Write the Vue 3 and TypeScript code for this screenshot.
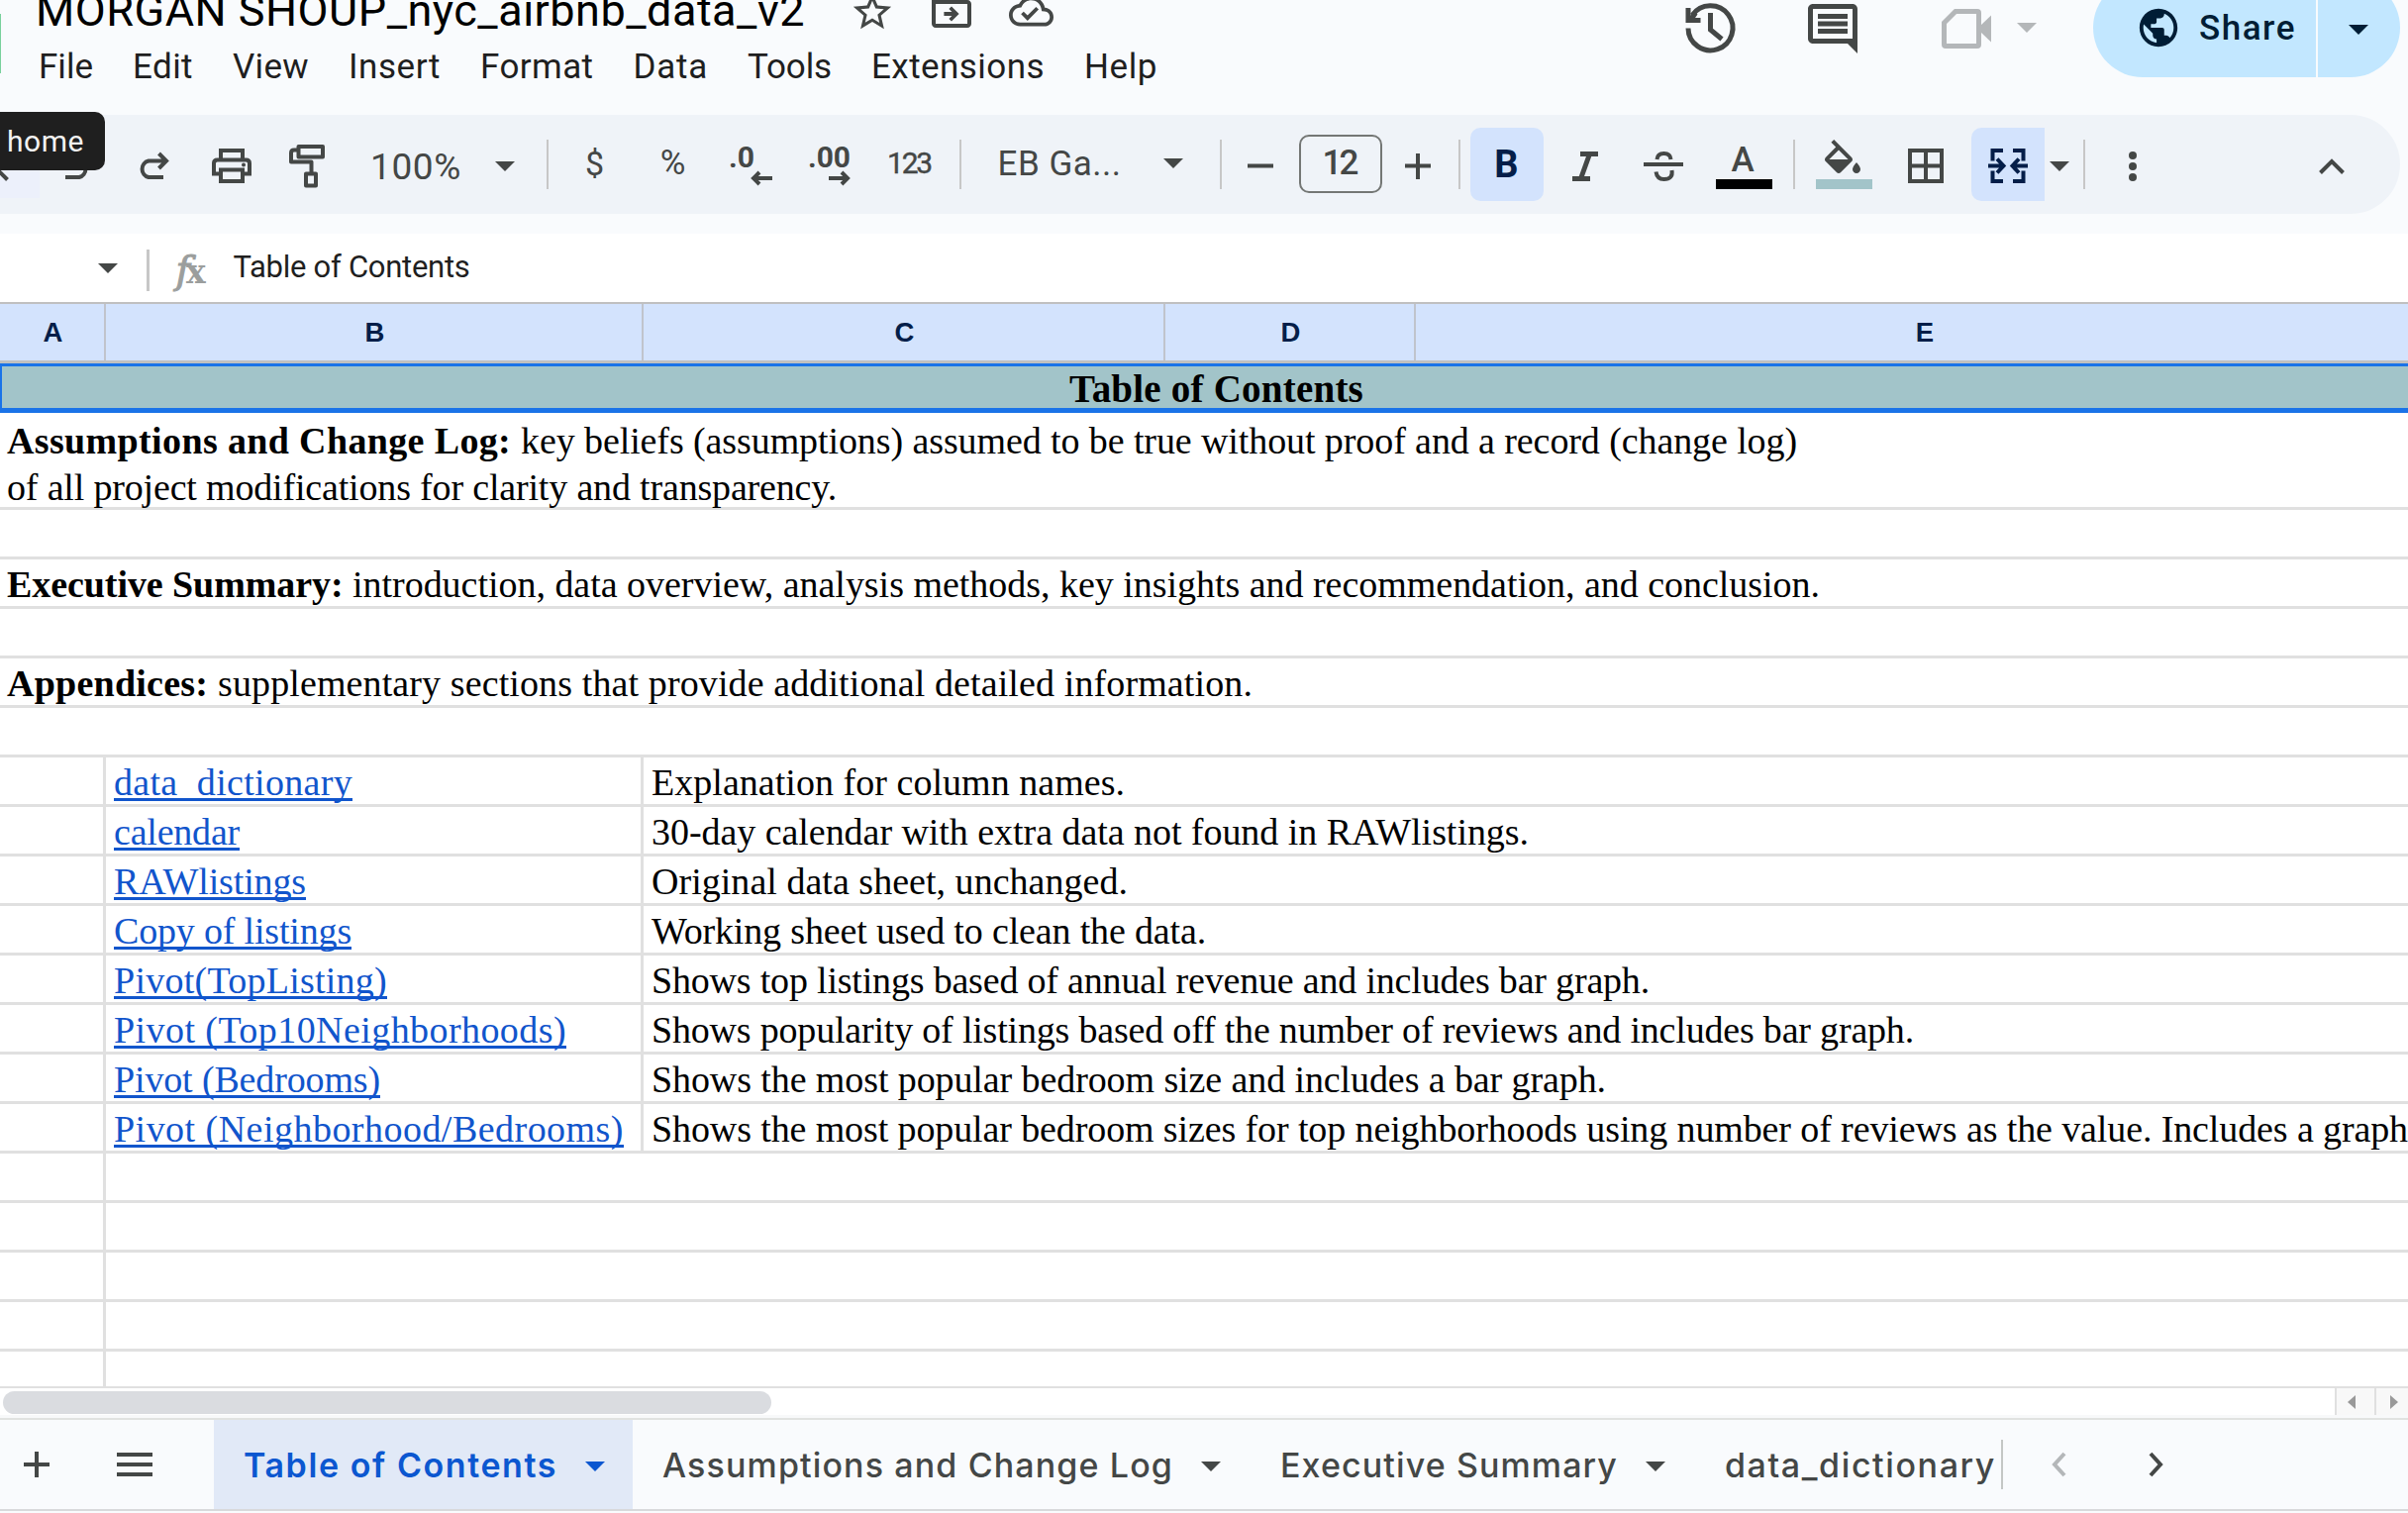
<script setup lang="ts">
import type { Directive } from 'vue'

/* Tracks a run of text in or out so that it fills the given width. */
const vFit: Directive<HTMLElement, number> = {
  mounted(el, { value }) {
    const natural = el.getBoundingClientRect().width
    const count = (el.textContent ?? '').length
    el.style.letterSpacing = `${(value - natural) / count}px`
  },
}

interface Label { text: string; width: number }
interface LinkRow { link: string; linkWidth: number; note: string; noteWidth: number }
interface Tab extends Label { active?: boolean; menu: boolean }

const menus: Label[] = [
  { text: 'File', width: 55 },
  { text: 'Edit', width: 61 },
  { text: 'View', width: 77 },
  { text: 'Insert', width: 93 },
  { text: 'Format', width: 114.5 },
  { text: 'Data', width: 75.5 },
  { text: 'Tools', width: 85 },
  { text: 'Extensions', width: 175 },
  { text: 'Help', width: 74 },
]

const columns = ['A', 'B', 'C', 'D', 'E']

const links: LinkRow[] = [
  { link: 'data_dictionary', linkWidth: 241, note: 'Explanation for column names.', noteWidth: 478 },
  { link: 'calendar', linkWidth: 127, note: '30-day calendar with extra data not found in RAWlistings.', noteWidth: 886 },
  { link: 'RAWlistings', linkWidth: 194, note: 'Original data sheet, unchanged.', noteWidth: 481 },
  { link: 'Copy of listings', linkWidth: 240, note: 'Working sheet used to clean the data.', noteWidth: 560 },
  { link: 'Pivot(TopListing)', linkWidth: 276, note: 'Shows top listings based of annual revenue and includes bar graph.', noteWidth: 1008 },
  { link: 'Pivot (Top10Neighborhoods)', linkWidth: 457, note: 'Shows popularity of listings based off the number of reviews and includes bar graph.', noteWidth: 1275 },
  { link: 'Pivot (Bedrooms)', linkWidth: 269, note: 'Shows the most popular bedroom size and includes a bar graph.', noteWidth: 964 },
  { link: 'Pivot (Neighborhood/Bedrooms)', linkWidth: 515, note: 'Shows the most popular bedroom sizes for top neighborhoods using number of reviews as the value. Includes a graph', noteWidth: 1774 },
]

const tabs: Tab[] = [
  { text: 'Table of Contents', width: 317, active: true, menu: true },
  { text: 'Assumptions and Change Log', width: 516, menu: true },
  { text: 'Executive Summary', width: 341, menu: true },
  { text: 'data_dictionary', width: 274, menu: false },
]
</script>

<template>
  <div class="app">
    <header class="top">
      <i class="logo-edge"></i>
      <div class="doc">
        <div class="title-row">
          <span class="title"><span v-fit="777">MORGAN SHOUP_nyc_airbnb_data_v2</span></span>
          <svg class="star" viewBox="0 0 24 24"><path d="M22 9.24l-7.19-.62L12 2 9.19 8.63 2 9.24l5.46 4.73L5.82 21 12 17.27 18.18 21l-1.63-7.03L22 9.24zM12 15.4l-3.76 2.27 1-4.28-3.32-2.88 4.38-.38L12 6.1l1.71 4.04 4.38.38-3.32 2.88 1 4.28L12 15.4z" /></svg>
          <svg class="folder" viewBox="0 0 24 24"><path d="M20 6h-8l-2-2H4c-1.1 0-2 .9-2 2v12c0 1.1.9 2 2 2h16c1.1 0 2-.9 2-2V8c0-1.1-.9-2-2-2zm0 12H4V8h16v10zm-8-1.2l3.8-3.8L12 9.2l-1.3 1.3 1.5 1.5H8.200v2h4l-1.500 1.500z" /></svg>
          <svg class="cloud" viewBox="0 0 24 24"><path d="M19.35 10.04C18.67 6.59 15.64 4 12 4 9.11 4 6.6 5.64 5.35 8.04 2.34 8.36 0 10.91 0 14c0 3.31 2.69 6 6 6h13c2.76 0 5-2.24 5-5 0-2.64-2.05-4.78-4.65-4.96zM19 18H6c-2.21 0-4-1.79-4-4 0-2.05 1.53-3.76 3.56-3.97l1.07-.11.5-.95C8.08 7.14 9.94 6 12 6c2.62 0 4.88 1.86 5.39 4.43l.3 1.5 1.53.11c1.56.1 2.78 1.41 2.78 2.96 0 1.65-1.35 3-3 3zm-9-3.82l-2.090-2.090L6.500 13.500 10 17l6.010-6.010-1.410-1.410z" /></svg>
        </div>
        <nav class="menus">
          <span v-for="m in menus" :key="m.text" v-fit="m.width">{{ m.text }}</span>
        </nav>
      </div>
      <div class="actions">
        <svg class="history" viewBox="0 0 50 50"><path class="ln thick" d="M2.500 25.500A22.500 22.500 0 1 0 6.500 12.500" /><path class="ln thick" d="M2.500 5v12.500H15M5 17l5-7M25 10v17l11.500 9.500" /></svg>
        <svg class="comment" viewBox="2 2 20 20"><path d="M21.99 4c0-1.1-.89-2-1.99-2H4c-1.100 0-2 .9-2 2v12c0 1.100.9 2 2 2h14l4 4-.01-18zM20 4v12H4V4h16zM6 12h12v2H6zm0-3h12v2H6zm0-3h12v2H6z" /></svg>
        <svg class="video" viewBox="0 0 50 40"><path d="M14 2.500H36Q37.500 2.500 37.500 4V36Q37.500 37.500 36 37.500H4Q2.500 37.500 2.500 36V14Z" fill="none" stroke="currentColor" stroke-width="5" /><path d="M50 6.500V33.500L39 23V17Z" /></svg>
        <svg class="caret pale" viewBox="0 0 20 10"><path d="M0 0H20L10 10Z" /></svg>
        <div class="share">
          <button class="share-main">
            <svg viewBox="0 0 24 24"><path d="M12 2C6.480 2 2 6.480 2 12s4.480 10 10 10 10-4.480 10-10S17.520 2 12 2zm-1 17.930c-3.950-.49-7-3.850-7-7.930 0-.62.080-1.210.21-1.790L9 15v1c0 1.100.9 2 2 2v1.930zm6.900-2.540c-.26-.81-1-1.390-1.900-1.390h-1v-3c0-.55-.45-1-1-1H8v-2h2c.55 0 1-.45 1-1V7h2c1.100 0 2-.9 2-2v-.41c2.930 1.190 5 4.060 5 7.410 0 2.080-.8 3.970-2.100 5.390z" /></svg>
            <span v-fit="98">Share</span>
          </button>
          <button class="share-more"><svg class="caret" viewBox="0 0 20 10"><path d="M0 0H20L10 10Z" /></svg></button>
        </div>
      </div>
    </header>

    <div class="toolbar">
      <div class="find"><svg viewBox="0 0 37 40"><path d="M-6 6L7.500 19.500" stroke="currentColor" stroke-width="4" /></svg></div>
      <div class="cell w78"><svg width="30" height="27" viewBox="0 0 30 27"><path d="M9.500 1L2 8.500 9.500 16M3 8.500H19A8.500 8.500 0 0 1 19 25H5" class="ln" /></svg></div>
      <div class="cell w80"><svg width="30" height="27" viewBox="0 0 30 27"><path d="M20.500 1L28 8.500 20.500 16M27 8.500H10A8.500 8.500 0 0 0 10 25H25" class="ln" /></svg></div>
      <div class="cell w78"><svg width="40" height="35" viewBox="0 0 40 35"><path d="M9 11V2H31V11M9 25.500H2V15Q2 11.500 5.500 11.500H34.500Q38 11.500 38 15V25.500H31M9 21.500H31V33H9Z" class="ln" /><circle cx="32" cy="16.500" r="2" /></svg></div>
      <div class="cell w74"><svg width="36" height="44" viewBox="0 0 36 44"><path d="M9.500 2H34V12.500H9.500ZM9.500 5.500H5Q2 5.500 2 8.500V17.500H22.500V28M17 29.500H27V41.500H17Z" class="ln" stroke-linejoin="round" /></svg></div>
      <div class="cell w146 label zoom"><span v-fit="92">100%</span></div>
      <div class="cell w34"><svg class="caret" viewBox="0 0 20 10"><path d="M0 0H20L10 10Z" /></svg></div>
      <div class="cell w52"><i class="rule"></i></div>
      <div class="cell w43 sym dollar">$</div>
      <div class="cell w115 sym percent">%</div>
      <div class="cell w44"><svg width="42" height="42" viewBox="0 0 42 42"><text x="-2" y="22" class="dec" textLength="26" lengthAdjust="spacingAndGlyphs">.0</text><path d="M29 27L23 33 29 39M23.500 33H42" class="ln" /></svg></div>
      <div class="cell w114"><svg width="42" height="42" viewBox="0 0 42 42"><text x="-1" y="22" class="dec" textLength="43" lengthAdjust="spacingAndGlyphs">.00</text><path d="M33 27L39 33 33 39M38.500 33H20" class="ln" /></svg></div>
      <div class="cell w48 num"><span v-fit="44">123</span></div>
      <div class="cell w54"><i class="rule"></i></div>
      <div class="cell w146 label family"><span v-fit="125">EB Ga...</span></div>
      <div class="cell w84"><svg class="caret up3" viewBox="0 0 20 10"><path d="M0 0H20L10 10Z" /></svg></div>
      <div class="cell w12"><i class="rule"></i></div>
      <div class="cell w68"><svg width="26" height="26" viewBox="0 0 26 26"><path d="M0 12.500H26" class="ln" /></svg></div>
      <div class="cell w94"><div class="size"><span v-fit="34">12</span></div></div>
      <div class="cell w62"><svg width="26" height="26" viewBox="0 0 26 26"><path d="M0 12.500H26M13 0V26" class="ln" /></svg></div>
      <div class="cell w22"><i class="rule"></i></div>
      <div class="cell w74 on bold">B</div>
      <div class="cell w84"><svg width="26" height="30" viewBox="0 0 26 30"><path d="M8 2.500H26M0 27.500H18M17.500 2.500L8.500 27.500" class="ln thick" /></svg></div>
      <div class="cell w74"><svg width="40" height="30" viewBox="0 0 40 30"><path d="M0 13H40M13.500 8Q14 2 20.500 2T27.500 8M12.500 20.500Q13.500 28 20.500 28 30 28 28.500 19" class="ln" /></svg></div>
      <div class="cell w89 swatch"><span>A</span><i class="ink"></i></div>
      <div class="cell w12"><i class="rule"></i></div>
      <div class="cell w89 swatch"><svg viewBox="0 0 24 18"><path d="M16.560 8.940L7.620 0 6.210 1.410l2.380 2.380-5.150 5.150c-.59.59-.59 1.540 0 2.120l5.500 5.500c.29.29.68.44 1.060.44s.77-.15 1.060-.44l5.500-5.500c.59-.58.59-1.530 0-2.120zM5.210 10L10 5.210 14.790 10H5.210zM19 11.500s-2 2.170-2 3.500c0 1.100.9 2 2 2s2-.9 2-2c0-1.330-2-3.500-2-3.500z" /></svg><i class="paint"></i></div>
      <div class="cell w75"><svg width="36" height="35" viewBox="0 0 36 35"><path d="M2 2H34V33H2ZM18 2V33M2 17.500H34" class="ln" /></svg></div>
      <div class="cell w74 on merge"><svg width="40" height="35" viewBox="0 0 40 35"><path d="M15 2H4.500V12.500M4.500 22.500V33H15M25 2H35.500V12.500M35.500 22.500V33H25M0 17.500H15M9 10.500L15.500 17.500 9 24.500M40 17.500H25M31 10.500L24.500 17.500 31 24.500" class="ln" /></svg></div>
      <div class="cell w29"><svg class="caret" viewBox="0 0 20 10"><path d="M0 0H20L10 10Z" /></svg></div>
      <div class="cell w22"><i class="rule"></i></div>
      <div class="cell w76"><svg width="8" height="32" viewBox="0 0 8 32"><circle cx="4" cy="5" r="4" /><circle cx="4" cy="16" r="4" /><circle cx="4" cy="27" r="4" /></svg></div>
      <div class="cell collapse"><svg width="26" height="16" viewBox="0 0 26 16"><path d="M1.500 14.500L13 3 24.500 14.500" class="ln" /></svg></div>
      <div class="tip"><span v-fit="78">home</span></div>
    </div>

    <div class="formula">
      <svg class="caret" viewBox="0 0 20 10"><path d="M0 0H20L10 10Z" /></svg>
      <i class="split"></i>
      <span class="fx"><em>f</em><b>x</b></span>
      <span class="value"><span v-fit="239">Table of Contents</span></span>
    </div>

    <main class="sheet">
      <div class="cols">
        <div v-for="c in columns" :key="c" :class="['col', 'col-' + c]">{{ c }}</div>
      </div>
      <div class="heading"><b v-fit="297">Table of Contents</b></div>
      <div class="row tall">
        <div><b v-fit="519">Assumptions and Change Log: </b><span v-fit="1289">key beliefs (assumptions) assumed to be true without proof and a record (change log)</span></div>
        <div><span v-fit="838">of all project modifications for clarity and transparency.</span></div>
      </div>
      <div class="row"></div>
      <div class="row full"><b v-fit="349">Executive Summary: </b><span v-fit="1482">introduction, data overview, analysis methods, key insights and recommendation, and conclusion.</span></div>
      <div class="row"></div>
      <div class="row full"><b v-fit="213">Appendices: </b><span v-fit="1045">supplementary sections that provide additional detailed information.</span></div>
      <div class="row"></div>
      <div v-for="r in links" :key="r.link" class="row">
        <div class="c-a"></div>
        <div class="c-b"><a v-fit="r.linkWidth">{{ r.link }}</a></div>
        <div class="c-c"><span v-fit="r.noteWidth">{{ r.note }}</span></div>
      </div>
      <div v-for="n in 5" :key="n" class="row"><div class="c-a"></div></div>
    </main>

    <div class="scroll">
      <i class="thumb"></i>
      <div class="arrow"><svg viewBox="0 0 8 14"><path d="M8 0V14L0 7Z" /></svg></div>
      <div class="arrow last"><svg viewBox="0 0 8 14"><path d="M0 0V14L8 7Z" /></svg></div>
    </div>

    <footer class="tabs">
      <svg class="add" viewBox="0 0 26 26"><path d="M0 13H26M13 0V26" class="ln" /></svg>
      <svg class="list" viewBox="0 0 36 24"><path d="M0 2H36M0 12H36M0 22H36" class="ln" /></svg>
      <div v-for="t in tabs" :key="t.text" :class="['tab', { active: t.active, plain: !t.menu }]">
        <span v-fit="t.width">{{ t.text }}</span>
        <svg v-if="t.menu" class="caret" viewBox="0 0 20 10"><path d="M0 0H20L10 10Z" /></svg>
      </div>
      <i class="tab-rule"></i>
      <svg class="prev" viewBox="0 0 15 24"><path d="M13 1L3 12 13 23" class="ln" /></svg>
      <svg class="next" viewBox="0 0 15 24"><path d="M2 1L12 12 2 23" class="ln" /></svg>
    </footer>
  </div>
</template>

<style>
body { margin: 0; overflow: hidden; }
</style>

<style scoped>
.app { width: 2432px; height: 1528px; overflow: hidden; background: #f9fbfd; display: flex; flex-direction: column; font-family: Roboto, "Liberation Sans", sans-serif; color: #444746; }
.app > * { flex: none; }
svg { display: block; fill: currentColor; overflow: visible; flex: none; }
span, b, a { white-space: pre; }
i { display: block; flex: none; }
.ln { fill: none; stroke: currentColor; stroke-width: 4; }
.ln.thick { stroke-width: 5; }
.caret { width: 20px; height: 10px; }

.top { height: 116px; display: flex; overflow: hidden; }
.logo-edge { width: 1px; height: 60px; margin-top: 14px; background: #79d19c; }
.doc { margin-left: 35px; }
.title-row { display: flex; align-items: center; height: 60px; margin-top: -20px; }
.title { width: 822px; font-size: 45px; color: #000; }
.title-row svg { margin-top: 3px; }
.star { width: 46px; height: 46px; }
.folder { width: 48px; height: 48px; margin-left: 33px; }
.cloud { width: 45px; height: 45px; margin-left: 34px; }
.menus { display: flex; gap: 40px; padding-left: 3px; line-height: 56px; font-size: 35px; color: #1f1f1f; }
.actions { margin-left: auto; margin-right: 8px; margin-top: -22px; height: 100px; display: flex; align-items: center; }
.history { width: 51px; height: 50px; }
.comment { width: 50px; height: 50px; margin: 2px 0 0 73px; }
.video { width: 50px; height: 40px; margin: 2px 0 0 85px; color: #b4b7b9; }
.pale { color: #b4b7b9; margin-left: 26px; }
.share { display: flex; width: 310px; height: 100px; margin-left: 57px; border-radius: 50px; overflow: hidden; gap: 2px; }
.share button { border: 0; background: #c2e7ff; color: #001d35; display: flex; align-items: center; padding: 0; font: 500 35px Roboto, sans-serif; }
.share-main { width: 225px; }
.share-main svg { width: 46px; height: 46px; margin: 0 18px 0 43px; }
.share-more { flex: 1; justify-content: center; padding: 4px 2px 0 0 !important; }

.toolbar { position: relative; width: 2424px; height: 100px; border-radius: 0 50px 50px 0; background: #eff3f8; display: flex; align-items: center; }
.find { width: 40px; margin-right: -3px; height: 56px; align-self: flex-start; margin-top: 28px; background: #ecf0fb; }
.find svg { width: 37px; height: 40px; margin-top: 18px; }
.cell { box-sizing: border-box; display: flex; align-items: center; justify-content: center; flex: none; height: 74px; }
.cell > svg { margin-top: 3px; }
.w12 { width: 12px } .w22 { width: 22px } .w29 { width: 29px } .w34 { width: 34px } .w43 { width: 43px } .w44 { width: 44px }
.w48 { width: 48px } .w52 { width: 52px } .w54 { width: 54px } .w62 { width: 62px } .w68 { width: 68px } .w74 { width: 74px }
.w75 { width: 75px } .w76 { width: 76px } .w78 { width: 78px } .w80 { width: 80px } .w84 { width: 84px } .w89 { width: 89px }
.w94 { width: 94px } .w114 { width: 114px } .w115 { width: 115px } .w146 { width: 146px }
.cell > .up3 { margin-top: -2px; }
.rule { width: 2px; height: 50px; background: #c7c7c7; }
.label { font-size: 35px; }
.zoom { font-size: 37px; padding-top: 4px; }
.family { padding-bottom: 2px; }
.sym { padding-bottom: 3px; }
.dollar { font-size: 34px; }
.percent { font-size: 35px; }
.dec { font: 700 30px Roboto, sans-serif; fill: currentColor; }
.num { font-size: 30px; padding: 0 2px 3px 0; -webkit-text-stroke: .4px; }
.size { box-sizing: border-box; width: 84px; height: 59px; border: 2px solid #747775; border-radius: 10px; display: flex; align-items: center; justify-content: center; font-size: 35px; font-weight: 500; padding: 0 3px 2px 0; margin-bottom: 1px; }
.on { background: #d3e3fd; color: #041e49; border-radius: 10px; }
.bold { font-size: 38px; font-weight: 700; padding-right: 1px; }
.swatch { flex-direction: column; justify-content: flex-end; }
.swatch span { font-size: 35px; line-height: 39px; font-weight: 500; margin-right: 3px; }
.swatch i { width: 57px; height: 10px; margin-bottom: 12px; }
.swatch svg { width: 48px; height: 36px; margin: 0 3px 4px 0; }
.ink { background: #000; }
.paint { background: #a2c4c9; }
.merge { margin-left: 9px; border-radius: 10px 0 0 10px; }
.collapse { margin-left: auto; width: 139px; }
.tip { position: absolute; left: 0; top: -3px; width: 99px; height: 59px; padding-left: 7px; border-radius: 0 10px 10px 0; background: #1f1f1f; color: #f2f2f2; font-size: 30px; line-height: 59px; }

.formula { height: 69px; margin-top: 20px; background: #fff; display: flex; align-items: center; }
.formula .caret { margin: 0 0 0 98.500px; }
.split { width: 3px; height: 42px; margin: 4px 0 0 29px; background: #c7c7c7; }
.fx { display: flex; align-items: baseline; width: 58px; height: 40px; margin: 4px 0 0 27px; color: #9b9e9d; line-height: 40px; }
.fx em { font: italic 400 39px/40px "DejaVu Serif", serif; -webkit-text-stroke: 1px; }
.fx b { font: 700 33px/40px "DejaVu Serif", serif; margin-left: -4px; }
.value { font-size: 31px; color: #1f1f1f; line-height: 62px; margin-bottom: 2px; }

.sheet { height: 1095px; width: 2458px; background: #fff; overflow: hidden; font-family: "Liberation Serif", serif; font-size: 38px; color: #000; }
.cols { display: flex; box-sizing: border-box; height: 62px; border-top: 2px solid #c0c0c0; border-bottom: 3px solid #c0c0c0; background: #d3e3fd; }
.col { box-sizing: border-box; border-right: 2px solid #c0c4cc; padding-left: 2px; text-align: center; font: 700 27.500px/57px "Liberation Sans", sans-serif; color: #041e49; }
.col-A { width: 107px } .col-B { width: 543px } .col-C { width: 527px } .col-D { width: 253px } .col-E { width: 1028px }
.heading { box-sizing: border-box; height: 50px; border: solid #1a73e8; border-width: 3px 0 5px 2px; padding-right: 3px; background: #a2c4c9; text-align: center; line-height: 46px; font-size: 39px; }
.row { box-sizing: border-box; height: 50px; border-bottom: 3px solid #e0e0e0; display: flex; line-height: 51px; }
.full, .tall { padding-left: 7px; }
.tall { display: block; height: 98px; padding-top: 5px; line-height: 47px; }
.c-a { box-sizing: border-box; flex: none; width: 107px; height: 50px; border-right: 3px solid #e0e0e0; }
.c-b { box-sizing: border-box; flex: none; width: 543px; height: 50px; border-right: 3px solid #e0e0e0; padding-left: 8px; }
.c-c { padding-left: 8px; }
.c-b a { color: #1155cc; text-decoration: underline; text-decoration-thickness: 3px; text-underline-offset: 3px; text-decoration-skip-ink: none; }

.scroll { box-sizing: border-box; height: 32px; border-top: 2px solid #e0e0e0; border-bottom: 3px solid #f8f9fa; background: #fff; display: flex; }
.thumb { width: 776px; height: 23px; margin: 3px auto 0 3px; border-radius: 12px; background: #dadce0; }
.arrow { box-sizing: border-box; width: 40px; height: 27px; border-left: 2px solid #e0e0e0; background: #f8f8f8; color: #999; display: flex; align-items: center; padding-left: 11px; }
.arrow svg { width: 8px; height: 14px; }
.arrow.last { width: 34px; padding-left: 14px; }

.tabs { box-sizing: border-box; height: 94px; border-top: 2px solid #e1e3e1; border-bottom: 2px solid #d8d9db; display: flex; align-items: center; color: #444746; font-size: 34px; font-weight: 500; font-family: Inter, Roboto, sans-serif; }
.add { width: 26px; height: 26px; margin: 0 68px 0 24px; }
.list { width: 36px; height: 24px; margin-right: 62px; }
.tab { height: 90px; line-height: 94px; display: flex; align-items: center; padding: 0 30px; }
.tab span { margin-top: 2px; }
.tab .caret { margin: 4px 0 0 28px; }
.tab.active { background: #e1e9f7; color: #0b57d0; font-weight: 600; padding: 0 28px 0 30px; }
.tab.plain { padding-right: 5px; }
.tab-rule { width: 2px; height: 50px; background: #c4c7c5; }
.prev { width: 15px; height: 24px; margin-left: 49px; color: #b4b7b9; }
.next { width: 15px; height: 24px; margin-left: 83px; }
</style>
